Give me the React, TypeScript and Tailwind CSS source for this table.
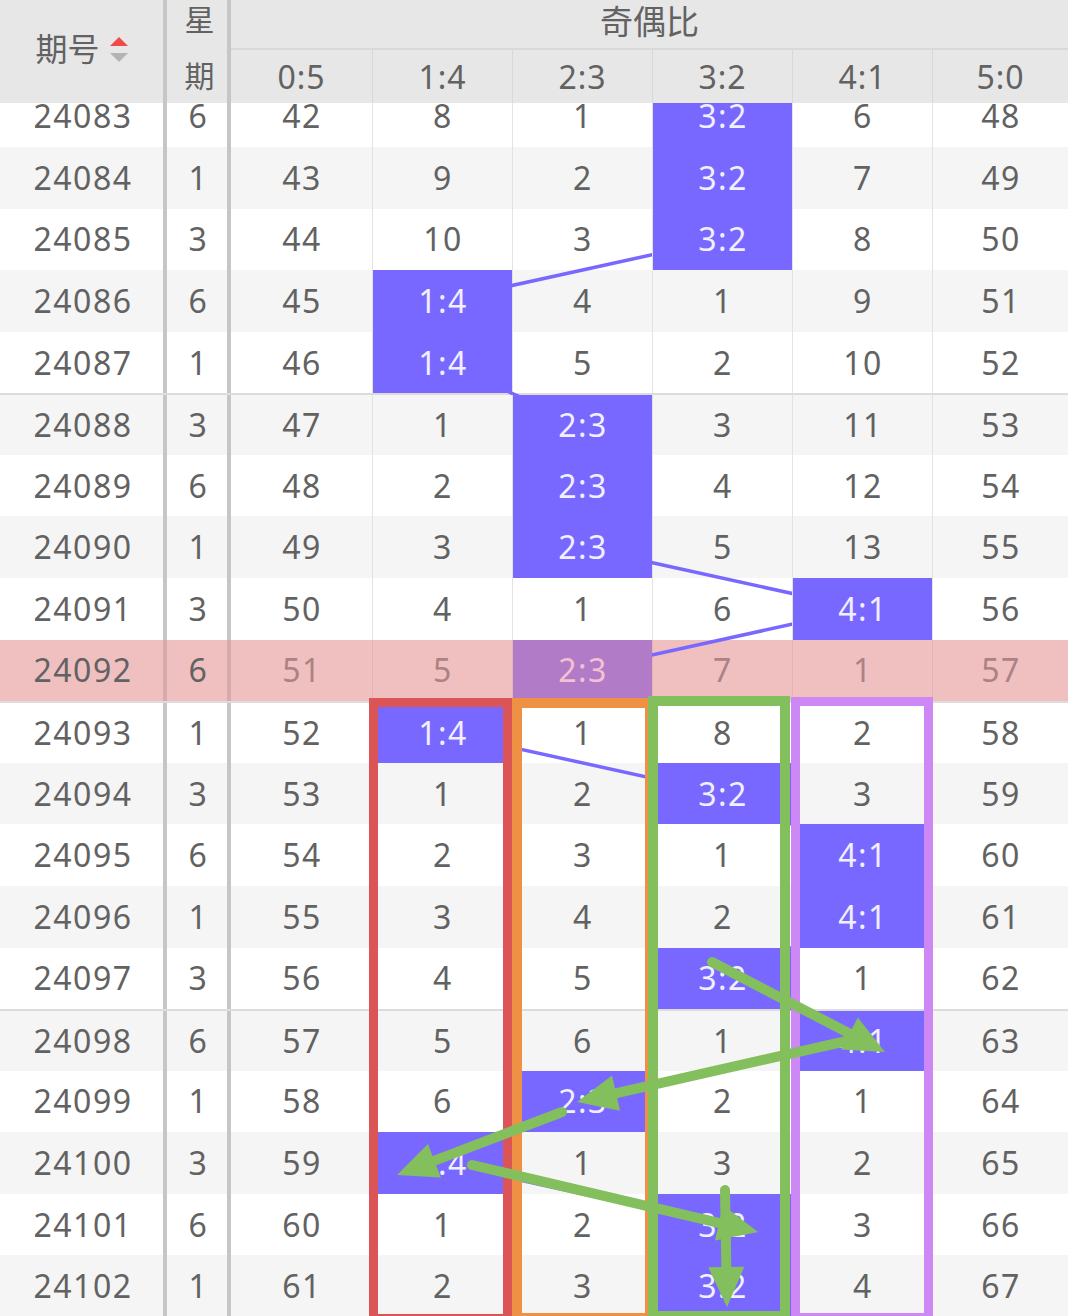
import React from "react";

type Cell = number | string;
interface Row {
  no: string;
  wk: number;
  v: Cell[];
}

const ROWS: Row[] = [
  { no: "24083", wk: 6, v: [42, 8, 1, "3:2", 6, 48] },
  { no: "24084", wk: 1, v: [43, 9, 2, "3:2", 7, 49] },
  { no: "24085", wk: 3, v: [44, 10, 3, "3:2", 8, 50] },
  { no: "24086", wk: 6, v: [45, "1:4", 4, 1, 9, 51] },
  { no: "24087", wk: 1, v: [46, "1:4", 5, 2, 10, 52] },
  { no: "24088", wk: 3, v: [47, 1, "2:3", 3, 11, 53] },
  { no: "24089", wk: 6, v: [48, 2, "2:3", 4, 12, 54] },
  { no: "24090", wk: 1, v: [49, 3, "2:3", 5, 13, 55] },
  { no: "24091", wk: 3, v: [50, 4, 1, 6, "4:1", 56] },
  { no: "24092", wk: 6, v: [51, 5, "2:3", 7, 1, 57] },
  { no: "24093", wk: 1, v: [52, "1:4", 1, 8, 2, 58] },
  { no: "24094", wk: 3, v: [53, 1, 2, "3:2", 3, 59] },
  { no: "24095", wk: 6, v: [54, 2, 3, 1, "4:1", 60] },
  { no: "24096", wk: 1, v: [55, 3, 4, 2, "4:1", 61] },
  { no: "24097", wk: 3, v: [56, 4, 5, "3:2", 1, 62] },
  { no: "24098", wk: 6, v: [57, 5, 6, 1, "4:1", 63] },
  { no: "24099", wk: 1, v: [58, 6, "2:3", 2, 1, 64] },
  { no: "24100", wk: 3, v: [59, "1:4", 1, 3, 2, 65] },
  { no: "24101", wk: 6, v: [60, 1, 2, "3:2", 3, 66] },
  { no: "24102", wk: 1, v: [61, 2, 3, "3:2", 4, 67] },
];

const LABELS = ["0:5", "1:4", "2:3", "3:2", "4:1", "5:0"];
const ROW_H = 61.58;
const TOP0 = 85.4; // first row is partly hidden under the header
const CX = [301.5, 442, 582, 722, 862, 1000];
const HOT = 9; // 24092 highlighted

const cy = (i: number) => TOP0 + i * ROW_H + ROW_H / 2;

// green annotation arrows [x1, y1, tipX, tipY]
const ARROWS: number[][] = [
  [712, 962, 885, 1052],
  [860, 1038, 577, 1102],
  [562, 1112, 397, 1175],
  [472, 1165, 758, 1232],
  [725, 1190, 727, 1307],
];

function Arrow({ a }: { a: number[] }) {
  const [x1, y1, x2, y2] = a;
  const len = Math.hypot(x2 - x1, y2 - y1);
  const dx = (x2 - x1) / len;
  const dy = (y2 - y1) / len;
  const L = 40;
  const W = 18;
  const bx = x2 - dx * L;
  const by = y2 - dy * L;
  const pts = `${x2},${y2} ${bx - dy * W},${by + dx * W} ${bx + dy * W},${by - dx * W}`;
  return (
    <g>
      <line x1={x1} y1={y1} x2={bx + dx * 4} y2={by + dy * 4} stroke="#84bf5e" strokeWidth={10} strokeLinecap="round" />
      <polygon points={pts} fill="#84bf5e" />
    </g>
  );
}

function SortIcon() {
  return (
    <svg width="18" height="26" viewBox="0 0 18 26">
      <polygon points="9,1 18,10 0,10" fill="#f04a4a" />
      <polygon points="0,17 18,17 9,26" fill="#b4b4b4" />
    </svg>
  );
}

export default function App() {
  const linePts = ROWS.map((r, i) => {
    const col = r.v.findIndex((c) => typeof c === "string");
    return `${CX[col]},${cy(i)}`;
  }).join(" ");

  return (
    <div className="relative w-[1068px] h-[1316px] overflow-hidden bg-white text-[#626262] font-['Noto_Sans','Noto_Sans_CJK_SC',sans-serif]">
      {/* --- HEADER --- */}
      <div className="flex h-[103px] bg-[#e7e7e7]">
        <div className="w-[167px] shrink-0 border-r-4 border-[#c6c6c6] flex items-center justify-center gap-[10px] pb-[6px]">
          <span className="text-[32px] leading-none">期号</span>
          <SortIcon />
        </div>
        <div className="w-[64px] shrink-0 border-r-4 border-[#c6c6c6] flex flex-col items-center justify-between pl-[5px] pt-[5px] pb-[12px] text-[30px] leading-none">
          <span>星</span>
          <span>期</span>
        </div>
        <div className="flex-1 flex flex-col">
          <div className="h-[50px] border-b-2 border-[#d9d9d9] flex items-center justify-center pb-[6px] text-[33px] leading-none">
            奇偶比
          </div>
          <div className="flex-1 grid grid-cols-[141px_140px_140px_140px_140px_136px]">
            {LABELS.map((l, k) => (
              <div
                key={l}
                className={`flex items-center justify-center text-[32px] tracking-[1px] leading-none ${k > 0 ? "border-l border-[#d9d9d9]" : ""}`}
              >
                {l}
              </div>
            ))}
          </div>
        </div>
      </div>

      {/* --- BODY --- */}
      <div className="h-[1213px] overflow-hidden">
        <div className="-mt-[17.6px]">
          {ROWS.map((r, i) => {
            const hot = i === HOT;
            const bg = hot ? "bg-[#f0c0c1]" : i % 2 === 1 ? "bg-[#f5f5f5]" : "bg-white";
            const sep = i > 0 && i % 5 === 0 ? "border-t-2 border-[#dcdcdc]" : "";
            const thick = hot ? "border-[#d6abac]" : "border-[#c6c6c6]";
            const thin = hot ? "border-[#e4b4b5]" : "border-[#e3e3e3]";
            return (
              <div
                key={r.no}
                className={`grid grid-cols-[167px_64px_141px_140px_140px_140px_140px_136px] h-[61.58px] text-[32px] tracking-[1.5px] leading-none ${bg} ${sep}`}
              >
                <div className={`border-r-4 ${thick} flex items-center justify-center pl-[3px]`}>{r.no}</div>
                <div className={`border-r-4 ${thick} flex items-center justify-center pl-[3px]`}>{r.wk}</div>
                {r.v.map((c, k) => {
                  const hit = typeof c === "string";
                  const base = `flex items-center justify-center pl-[1px] ${k > 0 ? `border-l ${thin}` : ""}`;
                  if (hit) {
                    return (
                      <div
                        key={k}
                        className={`${base} relative z-10 ${hot ? "bg-[#b27bc7] text-[#f3c2d2]" : "bg-[#7868ff] text-[#f0f0ff]"}`}
                      >
                        {c}
                      </div>
                    );
                  }
                  return (
                    <div key={k} className={`${base} ${hot ? "text-[#ad8283]" : ""}`}>
                      {c}
                    </div>
                  );
                })}
              </div>
            );
          })}
        </div>
      </div>

      {/* trend line, under the purple cells */}
      <svg className="absolute left-0 top-0 z-0 pointer-events-none" width="1068" height="1316">
        <polyline points={linePts} fill="none" stroke="#7868ff" strokeWidth={3.5} />
      </svg>

      {/* coloured column boxes */}
      <div className="absolute left-[369px] top-[698px] w-[143px] h-[625px] border-[9px] border-[#db5557] z-20" />
      <div className="absolute left-[512px] top-[698px] w-[143px] h-[625px] border-[10px] border-[#ee9145] z-20" />
      <div className="absolute left-[648px] top-[696px] w-[142px] h-[625px] border-[10px] border-[#84bf5e] z-20" />
      <div className="absolute left-[791px] top-[697px] w-[142px] h-[625px] border-[9px] border-[#cd88f5] z-20" />

      {/* green hand-drawn arrows */}
      <svg className="absolute left-0 top-0 z-30 pointer-events-none" width="1068" height="1316">
        {ARROWS.map((a, k) => (
          <Arrow key={k} a={a} />
        ))}
      </svg>
    </div>
  );
}
